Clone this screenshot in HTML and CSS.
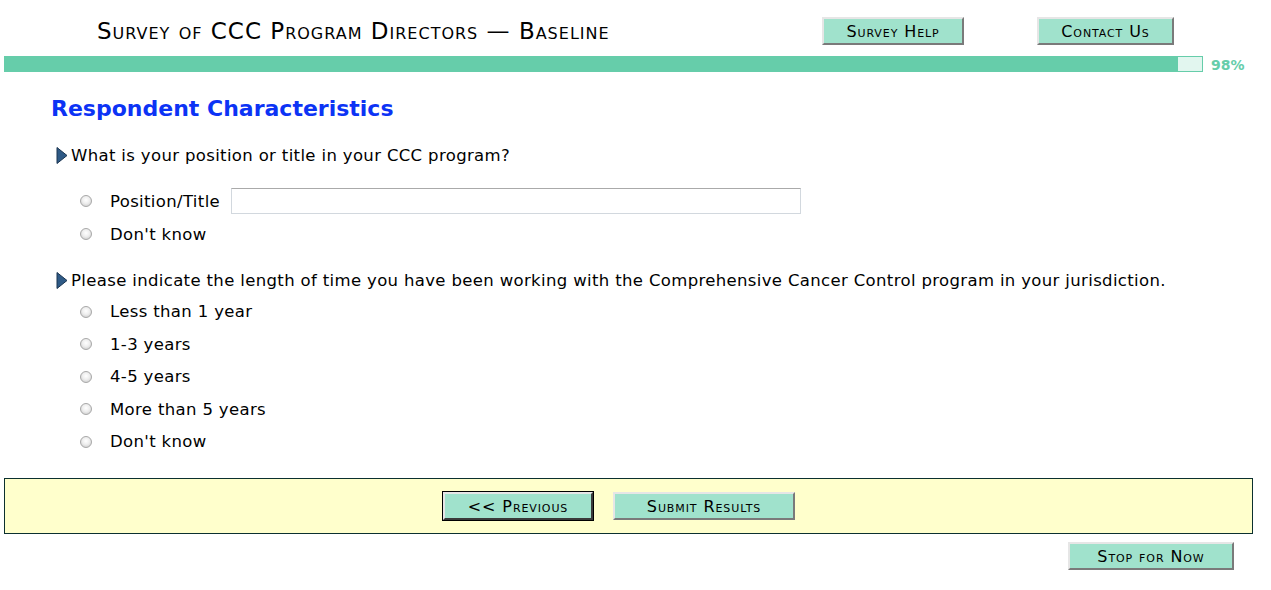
FILE: index.html
```html
<!DOCTYPE html>
<html lang="en">
<head>
    <meta charset="UTF-8">
    <title>Survey of CCC Program Directors</title>
    <link rel="stylesheet" href="styles.css">
</head>
<body>
    <div class="header">
        <div class="survey-title">Survey of CCC Program Directors &mdash; Baseline</div>
        <div class="header-buttons">
            <button class="btn btn-help">Survey Help</button>
            <button class="btn btn-contact">Contact Us</button>
        </div>
    </div>

    <div class="progress-row">
        <div class="progress">
            <div class="progress-fill" style="width: 98%"></div>
        </div>
        <span class="progress-text">98%</span>
    </div>

    <div class="content">
        <h1>Respondent Characteristics</h1>

        <!-- Question 1 -->
        <div class="question">
            <div class="question-text">
                <svg class="arrow" width="12" height="17" viewBox="0 0 12 17"><path d="M1 0.5 L11 8.5 L1 16.5 Z" fill="#2f5a86" stroke="#1b3550" stroke-width="1"/></svg>
                What is your position or title in your CCC program?
            </div>
            <div class="options first">
                <label class="option tall"><input type="radio" name="q1"><span>Position/Title</span><input type="text" class="text-field"></label>
                <label class="option"><input type="radio" name="q1"><span>Don't know</span></label>
            </div>
        </div>

        <!-- Question 2 -->
        <div class="question">
            <div class="question-text">
                <svg class="arrow" width="12" height="17" viewBox="0 0 12 17"><path d="M1 0.5 L11 8.5 L1 16.5 Z" fill="#2f5a86" stroke="#1b3550" stroke-width="1"/></svg>
                Please indicate the length of time you have been working with the Comprehensive Cancer Control program in your jurisdiction.
            </div>
            <div class="options">
                <label class="option"><input type="radio" name="q2"><span>Less than 1 year</span></label>
                <label class="option"><input type="radio" name="q2"><span>1-3 years</span></label>
                <label class="option"><input type="radio" name="q2"><span>4-5 years</span></label>
                <label class="option"><input type="radio" name="q2"><span>More than 5 years</span></label>
                <label class="option"><input type="radio" name="q2"><span>Don't know</span></label>
            </div>
        </div>
    </div>

    <div class="nav-box">
        <button class="btn btn-default btn-prev">&lt;&lt; Previous</button>
        <button class="btn btn-submit">Submit Results</button>
    </div>

    <div class="stop-row">
        <button class="btn btn-stop">Stop for Now</button>
    </div>
</body>
</html>
```

FILE: styles.css
```css
body {
    margin: 0;
    padding: 0 18px 0 4px;
    font-family: "DejaVu Sans", Verdana, sans-serif;
    color: #000;
    background: #fff;
}

.header {
    display: flex;
    align-items: center;
    height: 28px;
    padding-top: 17px;
    margin-bottom: 10px;
}

.survey-title {
    font-variant: small-caps;
    font-size: 23px;
    letter-spacing: 1px;
    margin-left: 93px;
    width: 725px;
}

.header-buttons {
    display: flex;
    gap: 73px;
}

.btn {
    font-family: "DejaVu Sans", Verdana, sans-serif;
    font-variant: small-caps;
    font-size: 16px;
    letter-spacing: 0.9px;
    color: #000;
    background-color: #a0e2cc;
    border: 2px solid;
    border-color: #e6e6e6 #7a7a7a #7a7a7a #e6e6e6;
    height: 28px;
    padding: 0;
    text-align: center;
    cursor: pointer;
}

.btn-help {
    width: 142px;
}

.btn-contact {
    width: 137px;
}

.btn-prev {
    width: 150px;
}

.btn-submit {
    width: 182px;
}

.btn-stop {
    width: 166px;
}

.btn-default {
    outline: 1px solid #000;
    border-color: #e6e6e6 #3a3a3a #3a3a3a #e6e6e6;
}

.progress-row {
    display: flex;
    align-items: center;
}

.progress {
    width: 1199px;
    height: 16px;
    background: #e2f6ef;
    border: 1px solid #66cdaa;
    box-sizing: border-box;
}

.progress-fill {
    height: 100%;
    background: #66cdaa;
}

.progress-text {
    margin-left: 8px;
    color: #66cdaa;
    font-weight: bold;
    font-size: 14px;
    padding-top: 2px;
}

.content {
    padding-left: 47px;
}

h1 {
    color: #0c33f5;
    font-size: 22px;
    margin: 23px 0 25px;
}

.question {
    margin-bottom: 20px;
}

.question-text {
    display: flex;
    align-items: center;
    font-size: 16.5px;
    letter-spacing: 0.35px;
    margin-left: 5px;
    gap: 3px;
}

.arrow {
    flex: none;
}

.options {
    display: flex;
    flex-direction: column;
    padding-left: 29px;
    margin-top: 6px;
}

.options.first {
    margin-top: 19px;
}

.option {
    display: flex;
    align-items: center;
    font-size: 16.5px;
    letter-spacing: 0.35px;
    height: 32.5px;
}

.option.tall {
    height: 34px;
}

.option input[type="radio"] {
    appearance: none;
    -webkit-appearance: none;
    margin: 0 18px 0 0;
    width: 12px;
    height: 12px;
    border-radius: 50%;
    border: 1px solid #a8a8a8;
    background: radial-gradient(circle at 50% 40%, #ffffff 0%, #eeeeee 45%, #c4c4c4 100%);
    box-sizing: border-box;
    flex: none;
}

.text-field {
    margin-left: 11px;
    width: 570px;
    height: 26px;
    box-sizing: border-box;
    border: 1px solid #d2d8de;
    border-top-color: #aaaaaa;
}

.nav-box {
    margin-top: 6px;
    width: 1249px;
    height: 56px;
    box-sizing: border-box;
    background: #ffffcc;
    border: 1px solid #0b3030;
    display: flex;
    justify-content: center;
    align-items: center;
    gap: 20px;
    padding-right: 19px;
}

.stop-row {
    width: 1249px;
    display: flex;
    justify-content: flex-end;
    padding-top: 8px;
    padding-right: 19px;
    box-sizing: border-box;
}
```
